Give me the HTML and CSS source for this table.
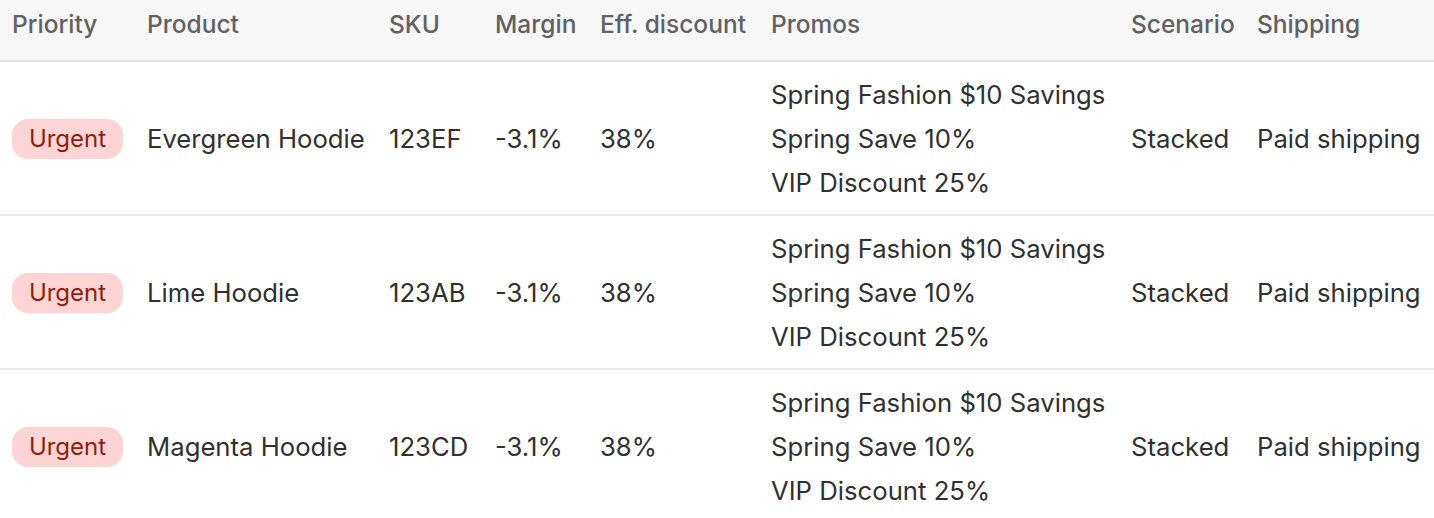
FILE: index.html
```html
<!DOCTYPE html>
<html lang="en">
<head>
<meta charset="utf-8">
<title>Promotions table</title>
<link rel="stylesheet" href="styles.css">
</head>
<body>
<table class="grid">
  <colgroup>
    <col class="c-priority">
    <col class="c-product">
    <col class="c-sku">
    <col class="c-margin">
    <col class="c-eff">
    <col class="c-promos">
    <col class="c-scenario">
    <col class="c-shipping">
  </colgroup>
  <thead>
    <tr>
      <th>Priority</th>
      <th>Product</th>
      <th>SKU</th>
      <th>Margin</th>
      <th>Eff. discount</th>
      <th>Promos</th>
      <th>Scenario</th>
      <th>Shipping</th>
    </tr>
  </thead>
  <tbody>
    <tr>
      <td class="badge-cell"><span class="badge">Urgent</span></td>
      <td>Evergreen Hoodie</td>
      <td>123EF</td>
      <td>-3.1%</td>
      <td>38%</td>
      <td><div class="promo">Spring Fashion $10 Savings</div><div class="promo">Spring Save 10%</div><div class="promo">VIP Discount 25%</div></td>
      <td>Stacked</td>
      <td>Paid shipping</td>
    </tr>
    <tr>
      <td class="badge-cell"><span class="badge">Urgent</span></td>
      <td>Lime Hoodie</td>
      <td>123AB</td>
      <td>-3.1%</td>
      <td>38%</td>
      <td><div class="promo">Spring Fashion $10 Savings</div><div class="promo">Spring Save 10%</div><div class="promo">VIP Discount 25%</div></td>
      <td>Stacked</td>
      <td>Paid shipping</td>
    </tr>
    <tr>
      <td class="badge-cell"><span class="badge">Urgent</span></td>
      <td>Magenta Hoodie</td>
      <td>123CD</td>
      <td>-3.1%</td>
      <td>38%</td>
      <td><div class="promo">Spring Fashion $10 Savings</div><div class="promo">Spring Save 10%</div><div class="promo">VIP Discount 25%</div></td>
      <td>Stacked</td>
      <td>Paid shipping</td>
    </tr>
  </tbody>
</table>
</body>
</html>
```
FILE: styles.css
```css
html, body {
  margin: 0;
  padding: 0;
  background: #ffffff;
}
body {
  font-family: Inter, "Noto Sans", "Liberation Sans", sans-serif;
  color: #303030;
  overflow: hidden;
}
.grid {
  border-collapse: collapse;
  table-layout: fixed;
  width: 1434px;
}
.c-priority { width: 135px; }
.c-product { width: 242px; }
.c-sku { width: 106px; }
.c-margin { width: 105px; }
.c-eff { width: 171px; }
.c-promos { width: 360px; }
.c-scenario { width: 126px; }
.c-shipping { width: 189px; }

.grid th {
  height: 60px;
  box-sizing: border-box;
  padding: 8px 12px 20px;
  background: #f7f7f7;
  border-bottom: 2px solid #e3e3e3;
  color: #616161;
  font-size: 24.5px;
  line-height: 32px;
  font-weight: 500;
  text-align: left;
  white-space: nowrap;
  vertical-align: top;
}
.grid td {
  padding: 11px 12px 9px;
  font-size: 25.7px;
  line-height: 44px;
  white-space: nowrap;
  vertical-align: middle;
  border-bottom: 2px solid #ebebeb;
}
.grid td.badge-cell {
  line-height: 0;
}
.promo {
  height: 44px;
}
.badge {
  display: flex;
  align-items: center;
  justify-content: center;
  width: 111px;
  height: 40px;
  box-sizing: border-box;
  border-radius: 16px;
  background: #fed5d4;
  color: #8e1f0b;
  font-size: 24px;
  line-height: 40px;
}
```
